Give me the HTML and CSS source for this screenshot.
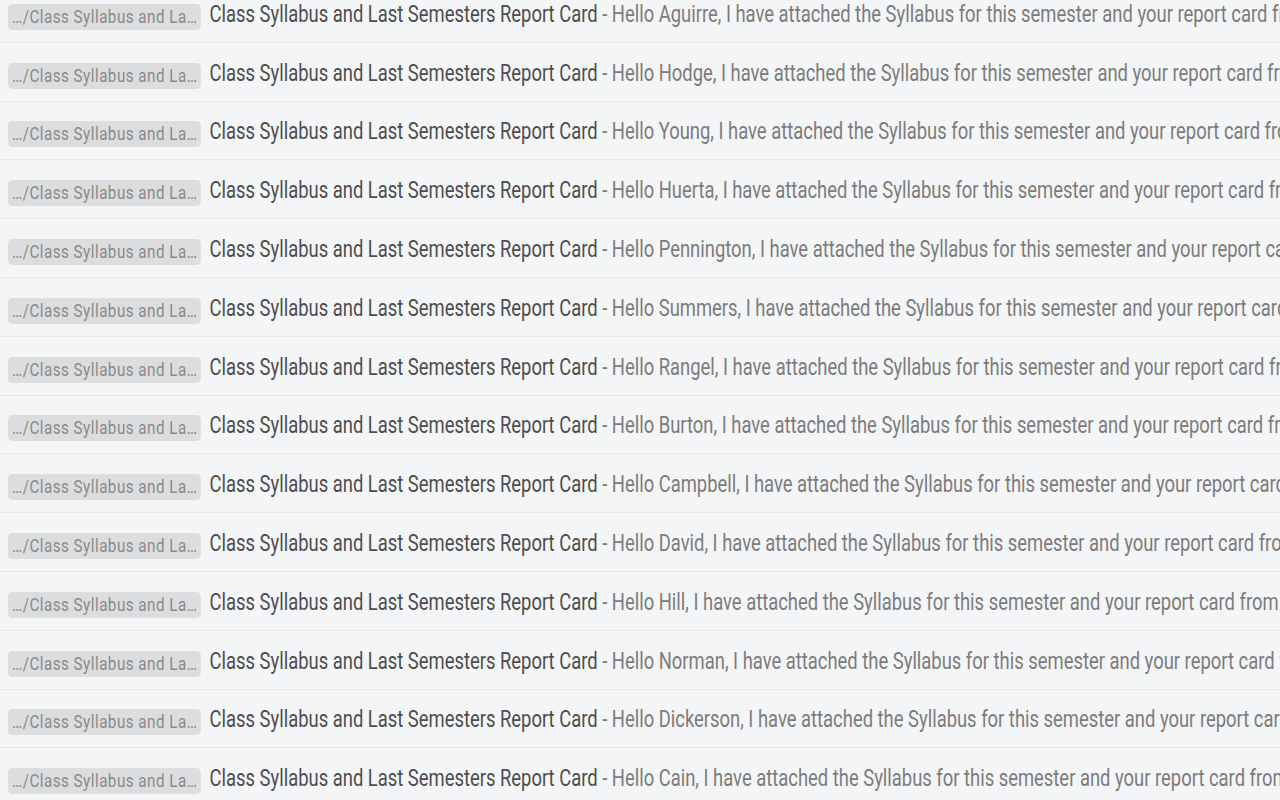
FILE: index.html
```html
<!DOCTYPE html>
<html>
<head>
<meta charset="utf-8">
<link rel="stylesheet" href="styles.css">
</head>
<body>
<div class="list">
  <div class="row"><span class="chip">…/Class Syllabus and La…</span><span class="subject">Class Syllabus and Last Semesters Report Card</span><span class="snippet"> - Hello Aguirre, I have attached the Syllabus for this semester and your report card from last semester.</span></div>
  <div class="row"><span class="chip">…/Class Syllabus and La…</span><span class="subject">Class Syllabus and Last Semesters Report Card</span><span class="snippet"> - Hello Hodge, I have attached the Syllabus for this semester and your report card from last semester.</span></div>
  <div class="row"><span class="chip">…/Class Syllabus and La…</span><span class="subject">Class Syllabus and Last Semesters Report Card</span><span class="snippet"> - Hello Young, I have attached the Syllabus for this semester and your report card from last semester.</span></div>
  <div class="row"><span class="chip">…/Class Syllabus and La…</span><span class="subject">Class Syllabus and Last Semesters Report Card</span><span class="snippet"> - Hello Huerta, I have attached the Syllabus for this semester and your report card from last semester.</span></div>
  <div class="row"><span class="chip">…/Class Syllabus and La…</span><span class="subject">Class Syllabus and Last Semesters Report Card</span><span class="snippet"> - Hello Pennington, I have attached the Syllabus for this semester and your report card from last semester.</span></div>
  <div class="row"><span class="chip">…/Class Syllabus and La…</span><span class="subject">Class Syllabus and Last Semesters Report Card</span><span class="snippet"> - Hello Summers, I have attached the Syllabus for this semester and your report card from last semester.</span></div>
  <div class="row"><span class="chip">…/Class Syllabus and La…</span><span class="subject">Class Syllabus and Last Semesters Report Card</span><span class="snippet"> - Hello Rangel, I have attached the Syllabus for this semester and your report card from last semester.</span></div>
  <div class="row"><span class="chip">…/Class Syllabus and La…</span><span class="subject">Class Syllabus and Last Semesters Report Card</span><span class="snippet"> - Hello Burton, I have attached the Syllabus for this semester and your report card from last semester.</span></div>
  <div class="row"><span class="chip">…/Class Syllabus and La…</span><span class="subject">Class Syllabus and Last Semesters Report Card</span><span class="snippet"> - Hello Campbell, I have attached the Syllabus for this semester and your report card from last semester.</span></div>
  <div class="row"><span class="chip">…/Class Syllabus and La…</span><span class="subject">Class Syllabus and Last Semesters Report Card</span><span class="snippet"> - Hello David, I have attached the Syllabus for this semester and your report card from last semester.</span></div>
  <div class="row"><span class="chip">…/Class Syllabus and La…</span><span class="subject">Class Syllabus and Last Semesters Report Card</span><span class="snippet"> - Hello Hill, I have attached the Syllabus for this semester and your report card from last semester.</span></div>
  <div class="row"><span class="chip">…/Class Syllabus and La…</span><span class="subject">Class Syllabus and Last Semesters Report Card</span><span class="snippet"> - Hello Norman, I have attached the Syllabus for this semester and your report card from last semester.</span></div>
  <div class="row"><span class="chip">…/Class Syllabus and La…</span><span class="subject">Class Syllabus and Last Semesters Report Card</span><span class="snippet"> - Hello Dickerson, I have attached the Syllabus for this semester and your report card from last semester.</span></div>
  <div class="row"><span class="chip">…/Class Syllabus and La…</span><span class="subject">Class Syllabus and Last Semesters Report Card</span><span class="snippet"> - Hello Cain, I have attached the Syllabus for this semester and your report card from last semester.</span></div>
</div>
</body>
</html>
```

FILE: styles.css
```css
html, body {
  margin: 0;
  padding: 0;
  height: 800px;
  overflow: hidden;
  background: #f4f5f6;
  font-family: Roboto, "Liberation Sans", sans-serif;
}

/* the whole list is drawn horizontally condensed */
.list {
  width: 125%;
  margin-top: -16px;
  display: flex;
  flex-direction: column;
  transform: scaleX(0.8);
  transform-origin: 0 0;
  overflow: hidden;
}

.row {
  height: 58.8px;
  box-sizing: border-box;
  border-bottom: 1.5px solid #e6e7e9;
  display: flex;
  align-items: center;
  padding-left: 10px;
  padding-top: 3px;
  white-space: nowrap;
  overflow: hidden;
  font-size: 23px;
}

.chip {
  flex: none;
  width: 241px;
  height: 26px;
  margin-top: 5px;
  box-sizing: border-box;
  background: #dcddde;
  color: #8a8a8a;
  border-radius: 5px;
  font-size: 19px;
  letter-spacing: 0.6px;
  line-height: 26px;
  padding-left: 5px;
  margin-right: 11px;
  overflow: hidden;
}

.subject {
  color: #4d4d4d;
  flex: none;
}

.snippet {
  color: #7c7c7c;
  white-space: pre;
}
```
